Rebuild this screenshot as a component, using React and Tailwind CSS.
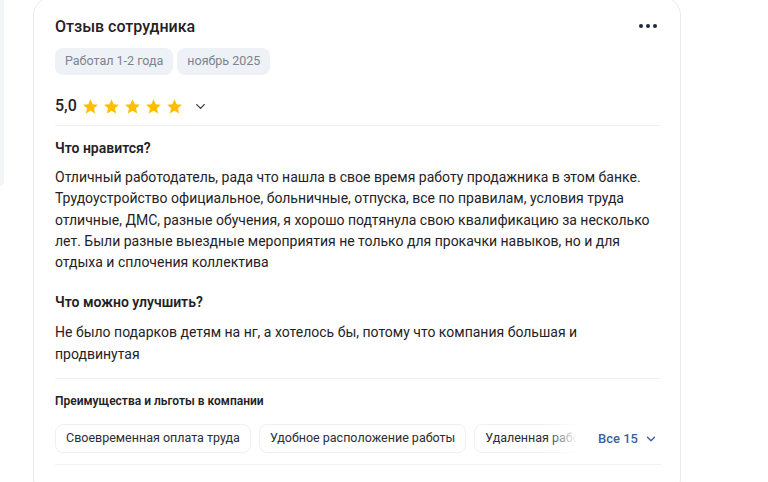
import { ChevronDown } from "lucide-react";

const Star = () => (
	<svg width="17" height="17" viewBox="0 0 24 24" className="shrink-0">
		<path fill="#ffbf00" d="M12 1.8l3.1 6.9 7.4.7-5.6 5 1.7 7.4L12 18l-6.6 3.8 1.7-7.4-5.6-5 7.4-.7z" />
	</svg>
);

const benefits = [
	"Своевременная оплата труда",
	"Удобное расположение работы",
	"Удаленная работа",
	"ДМС",
];

const App = () => {
	return (
		<div className="w-[768px] h-[482px] overflow-hidden bg-white flex items-start" style={{ fontFamily: "Roboto, 'Noto Sans', sans-serif" }}>
			<div className="w-[4px] h-[186px] shrink-0 bg-[#f4f5f8] rounded-br-xl" />

			<div className="ml-[29px] mt-[-3px] w-[648px] h-[500px] shrink-0 rounded-[18px] border border-[#e8eaee] bg-white pl-[21px] pr-[19px] pt-[16px] text-[#1f2226]">
				<div className="flex items-center justify-between h-[26px]">
					<div className="text-[16px] font-medium">Отзыв сотрудника</div>
					<div className="flex gap-[3px] mr-[4px] mb-[2px]">
						<span className="w-[4px] h-[4px] rounded-full bg-[#1f2a3c]" />
						<span className="w-[4px] h-[4px] rounded-full bg-[#1f2a3c]" />
						<span className="w-[4px] h-[4px] rounded-full bg-[#1f2a3c]" />
					</div>
				</div>

				<div className="flex gap-[4px] mt-[8px]">
					<span className="h-[27px] px-[10px] flex items-center rounded-lg bg-[#eef1f6] text-[12.5px] text-[#7b8391]">Работал 1-2 года</span>
					<span className="h-[27px] px-[10px] flex items-center rounded-lg bg-[#eef1f6] text-[12.5px] text-[#7b8391]">ноябрь 2025</span>
				</div>

				<div className="flex items-center mt-[18px] h-[26px]">
					<span className="text-[16px] font-medium mr-[5px]">5,0</span>
					<div className="flex gap-[4px]">
						<Star /><Star /><Star /><Star /><Star />
					</div>
					<ChevronDown size={15} strokeWidth={2.2} className="ml-[10px] text-[#3a3f47]" />
				</div>

				<div className="h-px bg-[#f0f1f4] mt-[6px]" />

				<div className="text-[14px] font-semibold mt-[12px] leading-[20px]">Что нравится?</div>
				<p className="text-[14px] leading-[21.3px] mt-[9px] pr-[4px]">
					Отличный работодатель, рада что нашла в свое время работу продажника в этом банке. Трудоустройство официальное, больничные, отпуска, все по правилам, условия труда отличные, ДМС, разные обучения, я хорошо подтянула свою квалификацию за несколько лет. Были разные выездные мероприятия не только для прокачки навыков, но и для отдыха и сплочения коллектива
				</p>

				<div className="text-[14px] font-semibold mt-[19px] leading-[20px]">Что можно улучшить?</div>
				<p className="text-[14px] leading-[21.3px] mt-[10px] pr-[4px]">
					Не было подарков детям на нг, а хотелось бы, потому что компания большая и продвинутая
				</p>

				<div className="h-px bg-[#f0f1f4] mt-[13px]" />

				<div className="text-[12px] font-semibold mt-[13px] leading-[18px]">Преимущества и льготы в компании</div>

				<div className="flex items-center mt-[14px]">
					<div className="relative w-[522px] overflow-hidden shrink-0">
						<div className="flex gap-[8px]">
							{benefits.map((b) => (
								<span key={b} className="h-[29px] px-[10px] flex items-center shrink-0 rounded-lg border border-[#eef0f3] text-[12.5px] text-[#2a2d33] whitespace-nowrap">{b}</span>
							))}
						</div>
						<div className="absolute right-0 top-0 h-full w-[30px] bg-gradient-to-r from-white/0 to-white" />
					</div>
					<button className="ml-[21px] flex items-center gap-[6px] text-[13px] font-medium text-[#3d5fa8]">
						Все 15
						<ChevronDown size={14} strokeWidth={2.4} />
					</button>
				</div>

				<div className="h-px bg-[#f0f1f4] mt-[11px]" />
			</div>
		</div>
	);
};

export default App;
